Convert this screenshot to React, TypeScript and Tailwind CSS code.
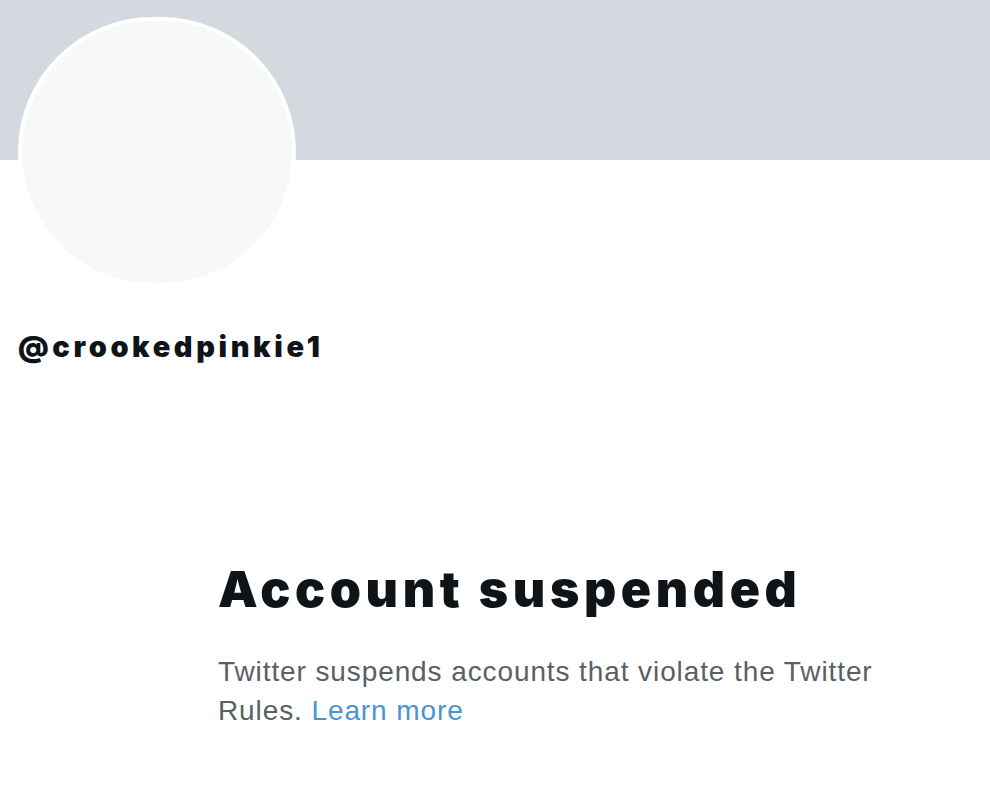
export default function App() {
    return (
        <div className="min-h-screen bg-white">
            {/* Banner */}
            <div className="h-[160px] bg-[#d4d9e0]" />

            {/* Avatar */}
            <div className="-mt-[143px] ml-[18px] h-[270px] w-[278px] rounded-full border-[4px] border-white bg-[#f7f9f9]" />

            {/* Handle */}
            <div className="mt-[44px] ml-[18px] font-['Inter',sans-serif] text-[29px] leading-[32px] font-black tracking-[3.6px] text-[#0f1419]">
                @crookedpinkie1
            </div>

            {/* Suspended notice */}
            <div className="mt-[196px] ml-[218px] w-[680px]">
                <h1 className="font-['Inter',sans-serif] text-[50px] leading-[60px] font-black tracking-[4.6px] text-[#0f1419]">
                    Account suspended
                </h1>
                <p className="mt-[33px] font-['Liberation_Sans',sans-serif] text-[28px] leading-[39px] tracking-[0.9px] text-[#595f66]">
                    Twitter suspends accounts that violate the Twitter Rules.{' '}
                    <a href="#" className="text-[#4a95cf]">
                        Learn more
                    </a>
                </p>
            </div>
        </div>
    );
}
